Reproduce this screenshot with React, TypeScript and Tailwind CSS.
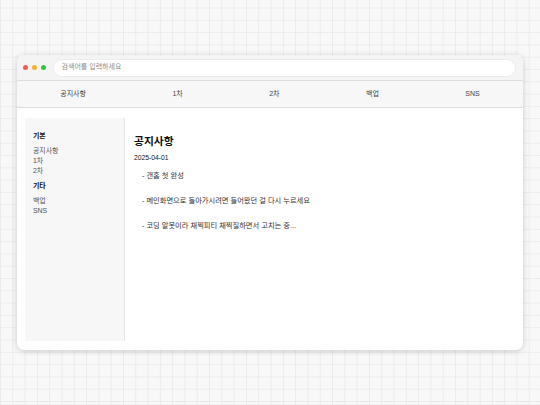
import React from 'react';

const navItems = ['공지사항', '1차', '2차', '백업', 'SNS'];

const sections = [
  { title: '기본', items: ['공지사항', '1차', '2차'] },
  { title: '기타', items: ['백업', 'SNS'] },
];

const notices = [
  '- 갠홈 첫 완성',
  '- 메인화면으로 돌아가시려면 들어왔던 걸 다시 누르세요',
  '- 코딩 알못이라 채찍피티 채찍질하면서 고치는 중...',
];

export default function App() {
  return (
    <div
      className="w-full h-[405px] overflow-hidden bg-[#f8f8f8] bg-[linear-gradient(to_right,#ebebeb_1px,transparent_1px),linear-gradient(to_bottom,#ebebeb_1px,transparent_1px)] [background-size:12.3px_12.3px] [background-position:0_7.5px] pt-[55px] pl-[17px]"
      style={{ fontFamily: '"Liberation Sans", "Noto Sans CJK KR", sans-serif' }}
    >
      <div className="w-[506px] h-[295px] bg-white rounded-[7px] shadow-[0_1px_6px_rgba(0,0,0,0.18)] overflow-hidden flex flex-col">
        {/* title bar */}
        <div className="h-[26px] flex items-center pl-[6px] pr-[7px] bg-[#f4f4f4] border-b border-[#dedede]">
          <div className="flex gap-[4.5px]">
            <span className="w-[4.5px] h-[4.5px] rounded-full bg-[#f25c54]" />
            <span className="w-[4.5px] h-[4.5px] rounded-full bg-[#f6b42a]" />
            <span className="w-[4.5px] h-[4.5px] rounded-full bg-[#34c24a]" />
          </div>
          <div className="ml-[7px] flex-1 h-[18px] rounded-full bg-white border border-[#ececec] flex items-center pl-[8px] text-[7px] text-[#8a8a8a]">
            검색어를 입력하세요
          </div>
        </div>

        {/* nav */}
        <div className="h-[27px] flex items-center justify-around bg-[#f7f7f7] border-b border-[#dcdcdc] text-[7px] text-[#444]">
          {navItems.map((item) => (
            <span key={item}>{item}</span>
          ))}
        </div>

        {/* body */}
        <div className="flex-1 flex pt-[10px] pb-[9px] pl-[8px]">
          <div className="w-[100px] bg-[#f7f7f7] border-r border-[#e3e3e3] pl-[8px] pt-[8px] text-[6.9px] leading-[10px]">
            {sections.map((s) => (
              <div key={s.title}>
                <div className="mt-[5px] mb-[5px] font-bold text-[#111]">{s.title}</div>
                {s.items.map((it) => (
                  <div key={it} className="text-[#555]">
                    {it}
                  </div>
                ))}
              </div>
            ))}
          </div>

          <div className="flex-1 pl-[9px] pt-[16px]">
            <h1 className="text-[10.75px] leading-[14px] font-bold text-[#111]">공지사항</h1>
            <div className="mt-[5px] text-[6.75px] leading-[10px] text-[#111]">2025-04-01</div>
            <div className="mt-[8px] pl-[8px] flex flex-col gap-[15px] text-[7.25px] leading-[10px] text-[#333]">
              {notices.map((n) => (
                <div key={n}>{n}</div>
              ))}
            </div>
          </div>
        </div>
      </div>
    </div>
  );
}
